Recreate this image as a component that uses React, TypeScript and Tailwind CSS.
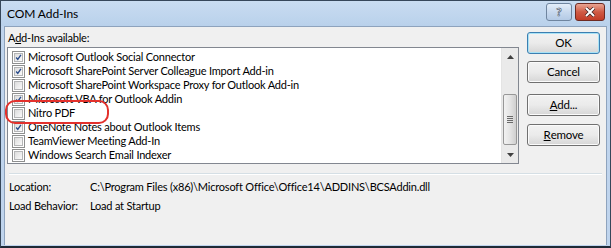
import React from "react";

const items: { label: string; checked: boolean }[] = [
  { label: "Microsoft Outlook Social Connector", checked: true },
  { label: "Microsoft SharePoint Server Colleague Import Add-in", checked: true },
  { label: "Microsoft SharePoint Workspace Proxy for Outlook Add-in", checked: false },
  { label: "Microsoft VBA for Outlook Addin", checked: true },
  { label: "Nitro PDF", checked: false },
  { label: "OneNote Notes about Outlook Items", checked: true },
  { label: "TeamViewer Meeting Add-In", checked: false },
  { label: "Windows Search Email Indexer", checked: false },
];

function CheckBox({ checked }: { checked: boolean }) {
  return (
    <div className="w-[13px] h-[13px] border border-[#8e8f8f] bg-white p-[1px] shrink-0">
      <div className="w-full h-full border border-[#b5b6b7] bg-gradient-to-br from-[#dcdcdc] to-[#fbfbfb] relative">
        {checked && (
          <svg viewBox="0 0 9 9" className="absolute inset-0 w-full h-full">
            <path d="M1.5 4.5 L3.6 7 L7.6 1.2" fill="none" stroke="#2b4d8c" strokeWidth="1.8" />
          </svg>
        )}
      </div>
    </div>
  );
}

function Btn({ children, primary }: { children: React.ReactNode; primary?: boolean }) {
  return (
    <div
      className={
        "w-[73px] h-[22px] rounded-[3px] border flex items-center justify-center text-[11.5px] text-black bg-gradient-to-b from-[#f2f2f2] via-[#ebebeb] to-[#d6d6d6] " +
        (primary ? "border-[#3c7fb1] shadow-[inset_0_0_0_1px_#a8e2f6]" : "border-[#707070] shadow-[inset_0_0_0_1px_#fbfbfb]")
      }
    >
      {children}
    </div>
  );
}

export default function App() {
  return (
    <div
      className="w-[611px] h-[248px] bg-[#bfd4ed] border border-[#36475a] border-b-2 border-b-[#1f2a36] flex flex-col text-black"
      style={{ fontFamily: 'Lato, "Noto Sans", sans-serif' }}
    >
      {/* Title bar */}
      <div className="h-[25px] flex items-center justify-between pl-[6px] pr-[5px] bg-gradient-to-b from-[#c9dcf1] to-[#b9d1eb]">
        <span className="text-[12px] tracking-[-0.1px] text-black">COM Add-Ins</span>
        <div className="flex gap-[3px] mt-[-4px]">
          <div className="w-[26px] h-[18px] rounded-[3px] border border-[#6f859f] bg-gradient-to-b from-[#e4eef9] via-[#c8d9ee] to-[#b4cae5] flex items-center justify-center">
            <span className="text-[12px] font-bold text-white leading-none" style={{ WebkitTextStroke: "0.6px #3b4a5e" }}>?</span>
          </div>
          <div className="w-[30px] h-[18px] rounded-[3px] border border-[#6d2a22] bg-gradient-to-b from-[#e8a493] via-[#cf5a44] to-[#c23c27] flex items-center justify-center">
            <svg viewBox="0 0 12 10" className="w-[12px] h-[10px]">
              <path d="M2 1 L10 9 M10 1 L2 9" stroke="#3b2020" strokeWidth="3.4" />
              <path d="M2 1 L10 9 M10 1 L2 9" stroke="#ffffff" strokeWidth="2" />
            </svg>
          </div>
        </div>
      </div>

      {/* Body */}
      <div className="flex-1 mx-[3px] mb-[1px] bg-[#f0f0f0] border-t border-x border-[#8ea3bd] flex flex-col text-[11px] tracking-[-0.2px]">
        <div className="flex pl-[2px] pt-[3px]">
          <div className="w-[512px] flex flex-col">
            <div className="h-[17px] pl-[1px] leading-[16px]">
              A<span className="underline">d</span>d-Ins available:
            </div>
            <div className="relative h-[117px] border border-[#828790] bg-white flex">
              <div className="flex-1 flex flex-col pt-[2px] overflow-hidden">
                {items.map((it) => (
                  <div key={it.label} className="h-[14px] flex items-center pl-[4px] gap-[3px]">
                    <CheckBox checked={it.checked} />
                    <span className="leading-[14px] whitespace-nowrap">{it.label}</span>
                  </div>
                ))}
              </div>
              {/* Scrollbar */}
              <div className="w-[17px] bg-[#eaeaea] border-l border-[#e4e4e4] flex flex-col">
                <div className="h-[17px] flex items-center justify-center">
                  <svg viewBox="0 0 7 4" className="w-[7px] h-[4px]">
                    <path d="M3.5 0 L7 4 L0 4 Z" fill="#404040" />
                  </svg>
                </div>
                <div className="h-[29px]" />
                <div className="mx-[1px] h-[51px] rounded-[2px] border border-[#979797] bg-gradient-to-r from-[#f2f2f2] via-[#e4e4e4] to-[#cfcfcf] flex flex-col items-center justify-center gap-[1px]">
                  <div className="w-[6px] h-[1px] bg-[#6a6a6a]" />
                  <div className="w-[6px] h-[1px] bg-[#6a6a6a]" />
                  <div className="w-[6px] h-[1px] bg-[#6a6a6a]" />
                  <div className="w-[6px] h-[1px] bg-[#6a6a6a]" />
                </div>
                <div className="flex-1" />
                <div className="h-[17px] flex items-center justify-center">
                  <svg viewBox="0 0 7 4" className="w-[7px] h-[4px]">
                    <path d="M0 0 L7 0 L3.5 4 Z" fill="#404040" />
                  </svg>
                </div>
              </div>
              {/* Red highlight around Nitro PDF */}
              <div className="absolute left-[-3px] top-[52px] w-[104px] h-[24px] rounded-[10px] border-2 border-[#e3312c]" />
            </div>
          </div>
          <div className="ml-[8px] pt-[2px] flex flex-col">
            <Btn primary>OK</Btn>
            <div className="h-[7px]" />
            <Btn>Cancel</Btn>
            <div className="h-[11px]" />
            <Btn>
              <span className="underline">A</span>dd...
            </Btn>
            <div className="h-[8px]" />
            <Btn>
              <span className="underline">R</span>emove
            </Btn>
          </div>
        </div>

        <div className="mt-[9px] mx-[4px] h-[1px] bg-[#d5dfe5] border-b border-white box-content" />

        <div className="pl-[4px] pt-[4px] flex flex-col gap-[3px]">
          <div className="flex h-[16px] items-center whitespace-nowrap">
            <span className="w-[81px] shrink-0">Location:</span>
            <span>C:\Program Files (x86)\Microsoft Office\Office14\ADDINS\BCSAddin.dll</span>
          </div>
          <div className="flex h-[16px] items-center whitespace-nowrap">
            <span className="w-[81px] shrink-0">Load Behavior:</span>
            <span>Load at Startup</span>
          </div>
        </div>
      </div>
    </div>
  );
}
